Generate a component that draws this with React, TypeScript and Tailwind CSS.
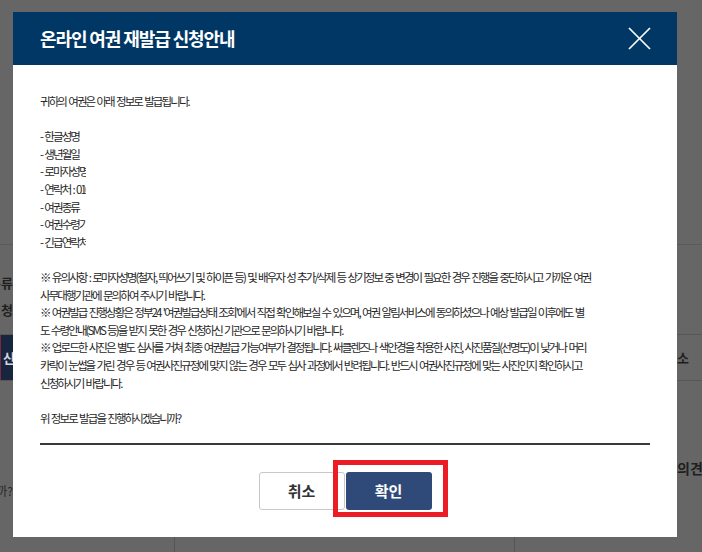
import React from "react";

const notices = [
  "※ 유의사항 : 로마자성명(철자, 띄어쓰기 및 하이픈 등) 및 배우자 성 추가/삭제 등 상기정보 중 변경이 필요한 경우 진행을 중단하시고 가까운 여권",
  "사무대행기관에 문의하여 주시기 바랍니다.",
  "※ 여권발급 진행상황은 정부24 '여권발급상태 조회'에서 직접 확인해보실 수 있으며, 여권 알림서비스에 동의하셨으나 예상 발급일 이후에도 별",
  "도 수령안내(SMS 등)을 받지 못한 경우 신청하신 기관으로 문의하시기 바랍니다.",
  "※ 업로드한 사진은 별도 심사를 거쳐 최종 여권발급 가능여부가 결정됩니다. 써클렌즈나 색안경을 착용한 사진, 사진품질(선명도)이 낮거나 머리",
  "카락이 눈썹을 가린 경우 등 여권사진규정에 맞지 않는 경우 모두 심사 과정에서 반려됩니다. 반드시 여권사진규정에 맞는 사진인지 확인하시고",
  "신청하시기 바랍니다.",
];

const fields = [
  "- 한글성명",
  "- 생년월일",
  "- 로마자성명",
  "- 연락처 : 010",
  "- 여권종류",
  "- 여권수령기관",
  "- 긴급연락처",
];

function BackgroundPage() {
  // dimmed page behind the modal
  return (
    <div className="flex h-full flex-col text-[#1f1f1f]">
      <div className="h-[244px]" />
      <div className="flex h-[90px] justify-between border-t border-[#5a5a5a]">
        <div className="flex w-[13px] flex-col items-end overflow-hidden pt-[24px] text-[13px] font-bold leading-[27px]">
          <span className="whitespace-nowrap">종류</span>
          <span className="whitespace-nowrap">신청</span>
        </div>
      </div>
      <div className="flex h-[47px] items-center justify-between border-y border-[#575757]">
        <div className="flex h-full w-[13px] items-center overflow-hidden bg-[#18253f] text-[13px] font-bold">
          <span className="ml-[-1px] w-[2px] shrink-0 self-stretch bg-[#7a2a3a]" />
          <span className="ml-[2px] whitespace-nowrap text-[#d8d8d8]">신</span>
        </div>
        <div className="w-[25px] overflow-hidden whitespace-nowrap text-[13px] font-bold">소</div>
      </div>
      <div className="relative flex h-[155px] justify-between">
        <div className="flex w-[13px] items-end justify-end overflow-hidden pb-[36px] text-[12px]">
          <span className="whitespace-nowrap text-[#2a2a2a]">하시겠습니까?</span>
        </div>
        <div className="w-[25px] overflow-hidden pt-[77px] text-[14px] font-bold">
          <span className="whitespace-nowrap">의견을</span>
        </div>
      </div>
      <div className="flex flex-1">
        <div className="w-[174px]" />
        <div className="w-[341px] border-x border-[#555555]" />
      </div>
    </div>
  );
}

function CloseIcon() {
  return (
    <svg width="23" height="23" viewBox="0 0 23 23" fill="none" stroke="#ffffff" strokeWidth="1.7">
      <line x1="1" y1="1" x2="22" y2="22" />
      <line x1="22" y1="1" x2="1" y2="22" />
    </svg>
  );
}

function Modal() {
  return (
    <div className="absolute left-[13px] top-[12px] flex h-[525px] w-[664px] flex-col bg-white">
      <div className="flex h-[53px] shrink-0 items-center justify-between bg-[#003764] pl-[27px] pr-[26px]">
        <h1 className="text-[18px] font-bold tracking-[-1.1px] text-white">온라인 여권 재발급 신청안내</h1>
        <CloseIcon />
      </div>

      <div className="px-[27px] pt-[28px] text-[11.5px] leading-[17.6px] tracking-[-1.9px] text-[#262626] [word-spacing:1.5px]">
        <p className="whitespace-nowrap">귀하의 여권은 아래 정보로 발급됩니다.</p>
        <div className="h-[17.6px]" />
        {fields.map((f) => (
          <div key={f} className="w-[46px] overflow-hidden whitespace-nowrap">
            {f}
          </div>
        ))}
        <div className="h-[17.6px]" />
        {notices.map((n) => (
          <p key={n} className="whitespace-nowrap">
            {n}
          </p>
        ))}
        <div className="h-[17.6px]" />
        <p className="whitespace-nowrap">위 정보로 발급을 진행하시겠습니까?</p>

        <div className="mt-[16px] border-t-2 border-[#3a3a3a]" />

        <div className="mt-[27px] flex justify-center gap-[1px] tracking-normal [word-spacing:0px]">
          <button className="h-[38px] w-[86px] rounded-[3px] border border-[#c8c8c8] bg-white text-[15px] font-bold text-[#333333]">
            취소
          </button>
          <div className="relative">
            <button className="h-[38px] w-[86px] rounded-[3px] bg-[#2f4a78] text-[15px] font-bold text-white">
              확인
            </button>
            <div className="pointer-events-none absolute bottom-[-7px] left-[-13px] right-[-16px] top-[-12px] border-[5px] border-[#ec1c24]" />
          </div>
        </div>
      </div>
    </div>
  );
}

export default function App() {
  return (
    <div className="relative h-[552px] w-[702px] overflow-hidden bg-[#666666] font-['Noto_Sans_CJK_KR','Noto_Sans',sans-serif]">
      <BackgroundPage />
      <Modal />
    </div>
  );
}
